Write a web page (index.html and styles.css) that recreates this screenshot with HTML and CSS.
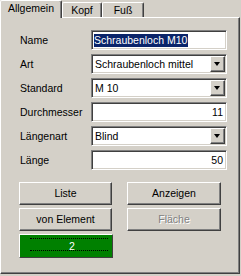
FILE: index.html
```html
<!DOCTYPE html>
<html>
<head>
<meta charset="utf-8">
<link rel="stylesheet" href="styles.css">
</head>
<body>
<div class="window">
  <div class="tabs">
    <div class="tab active tab-allg">Allgemein</div>
    <div class="tab tab-kopf">Kopf</div>
    <div class="tab tab-fuss">Fuß</div>
  </div>
  <div class="panel">
    <div class="form">
      <div class="label">Name</div>
      <div class="field"><span class="sel">Schraubenloch M10</span></div>
      <div class="label">Art</div>
      <div class="field combo"><span class="val">Schraubenloch mittel</span><span class="drop"><span class="arrow"></span></span></div>
      <div class="label">Standard</div>
      <div class="field combo"><span class="val">M 10</span><span class="drop"><span class="arrow"></span></span></div>
      <div class="label">Durchmesser</div>
      <div class="field num">11</div>
      <div class="label">Längenart</div>
      <div class="field combo"><span class="val">Blind</span><span class="drop"><span class="arrow"></span></span></div>
      <div class="label">Länge</div>
      <div class="field num">50</div>
    </div>
    <div class="buttons">
      <div class="btn">Liste</div>
      <div class="btn">Anzeigen</div>
      <div class="btn">von Element</div>
      <div class="btn disabled">Fläche</div>
    </div>
    <div class="status"><span class="dots"></span><span class="count">2</span></div>
  </div>
</div>
</body>
</html>
```

FILE: styles.css
```css
body {
  margin: 0;
  background: #d4d0c8;
  font-family: "Liberation Sans", Arial, sans-serif;
  font-size: 10.5px;
  color: #000;
}
.window {
  width: 241px;
  height: 276px;
}
.tabs {
  display: flex;
  height: 17px;
  align-items: flex-end;
}
.tab {
  box-sizing: border-box;
  height: 15px;
  border-top: 1px solid #fff;
  border-left: 1px solid #fff;
  border-right: 1px solid #404040;
  box-shadow: inset -1px 0 #808080;
  border-radius: 2px 2px 0 0;
  display: flex;
  align-items: center;
  justify-content: center;
  padding-bottom: 1px;
  background: #d4d0c8;
}
.tab.active {
  height: 18px;
  margin-bottom: -1px;
  position: relative;
  z-index: 1;
  padding-bottom: 4px;
}
.tab-allg { width: 62px; }
.tab-kopf { width: 40px; }
.tab-fuss { width: 42px; }
.panel {
  box-sizing: border-box;
  width: 240px;
  height: 257px;
  border: 1px solid;
  border-color: #fff #404040 #404040 #fff;
  box-shadow: inset -1px -1px #808080;
  padding: 12px 0 0 19px;
}
.form {
  display: grid;
  grid-template-columns: 71px 136px;
  grid-auto-rows: 20px;
  row-gap: 4px;
}
.label {
  display: flex;
  align-items: center;
}
.field {
  box-sizing: border-box;
  background: #fff;
  border: 1px solid;
  border-color: #808080 #fff #fff #808080;
  box-shadow: inset 1px 1px #404040, inset -1px -1px #d4d0c8;
  display: flex;
  align-items: center;
  padding: 0 2px 0 2px;
  white-space: nowrap;
  overflow: hidden;
}
.sel {
  background: #0a246a;
  color: #fff;
  line-height: 13px;
  padding-right: 1px;
}
.combo {
  padding-right: 1px;
  justify-content: space-between;
}
.val {
  flex: 1;
  padding-left: 1px;
}
.drop {
  box-sizing: border-box;
  width: 15px;
  height: 16px;
  background: #d4d0c8;
  border: 1px solid;
  border-color: #fff #404040 #404040 #fff;
  box-shadow: inset -1px -1px #808080;
  display: flex;
  align-items: center;
  justify-content: center;
}
.arrow {
  width: 0;
  height: 0;
  border-left: 3.5px solid transparent;
  border-right: 3.5px solid transparent;
  border-top: 4px solid #000;
  margin-right: 1px;
}
.num {
  justify-content: flex-end;
  padding-right: 3px;
}
.buttons {
  display: grid;
  grid-template-columns: 93px 94px;
  grid-auto-rows: 23px;
  column-gap: 15px;
  row-gap: 3px;
  margin: 12px 0 0 -1px;
}
.btn {
  box-sizing: border-box;
  border: 1px solid;
  border-color: #fff #404040 #404040 #fff;
  box-shadow: inset -1px -1px #808080;
  display: flex;
  align-items: center;
  justify-content: center;
  padding-bottom: 1px;
}
.btn.disabled {
  color: #808080;
  text-shadow: 1px 1px #fff;
}
.status {
  box-sizing: border-box;
  position: relative;
  width: 94px;
  height: 24px;
  margin: 3px 0 0 -1px;
  background: #008000;
  border: 1px solid;
  border-color: #fff #404040 #404040 #fff;
  display: flex;
  align-items: center;
  justify-content: center;
  padding-left: 12px;
  color: #fff;
}
.dots {
  position: absolute;
  left: 10px;
  right: 4px;
  top: 3px;
  bottom: 6px;
  border-top: 1px dotted #000;
  border-bottom: 1px dotted #000;
  background: linear-gradient(to bottom, transparent 5px, transparent 5px);
}
.count {
  position: relative;
}
```
